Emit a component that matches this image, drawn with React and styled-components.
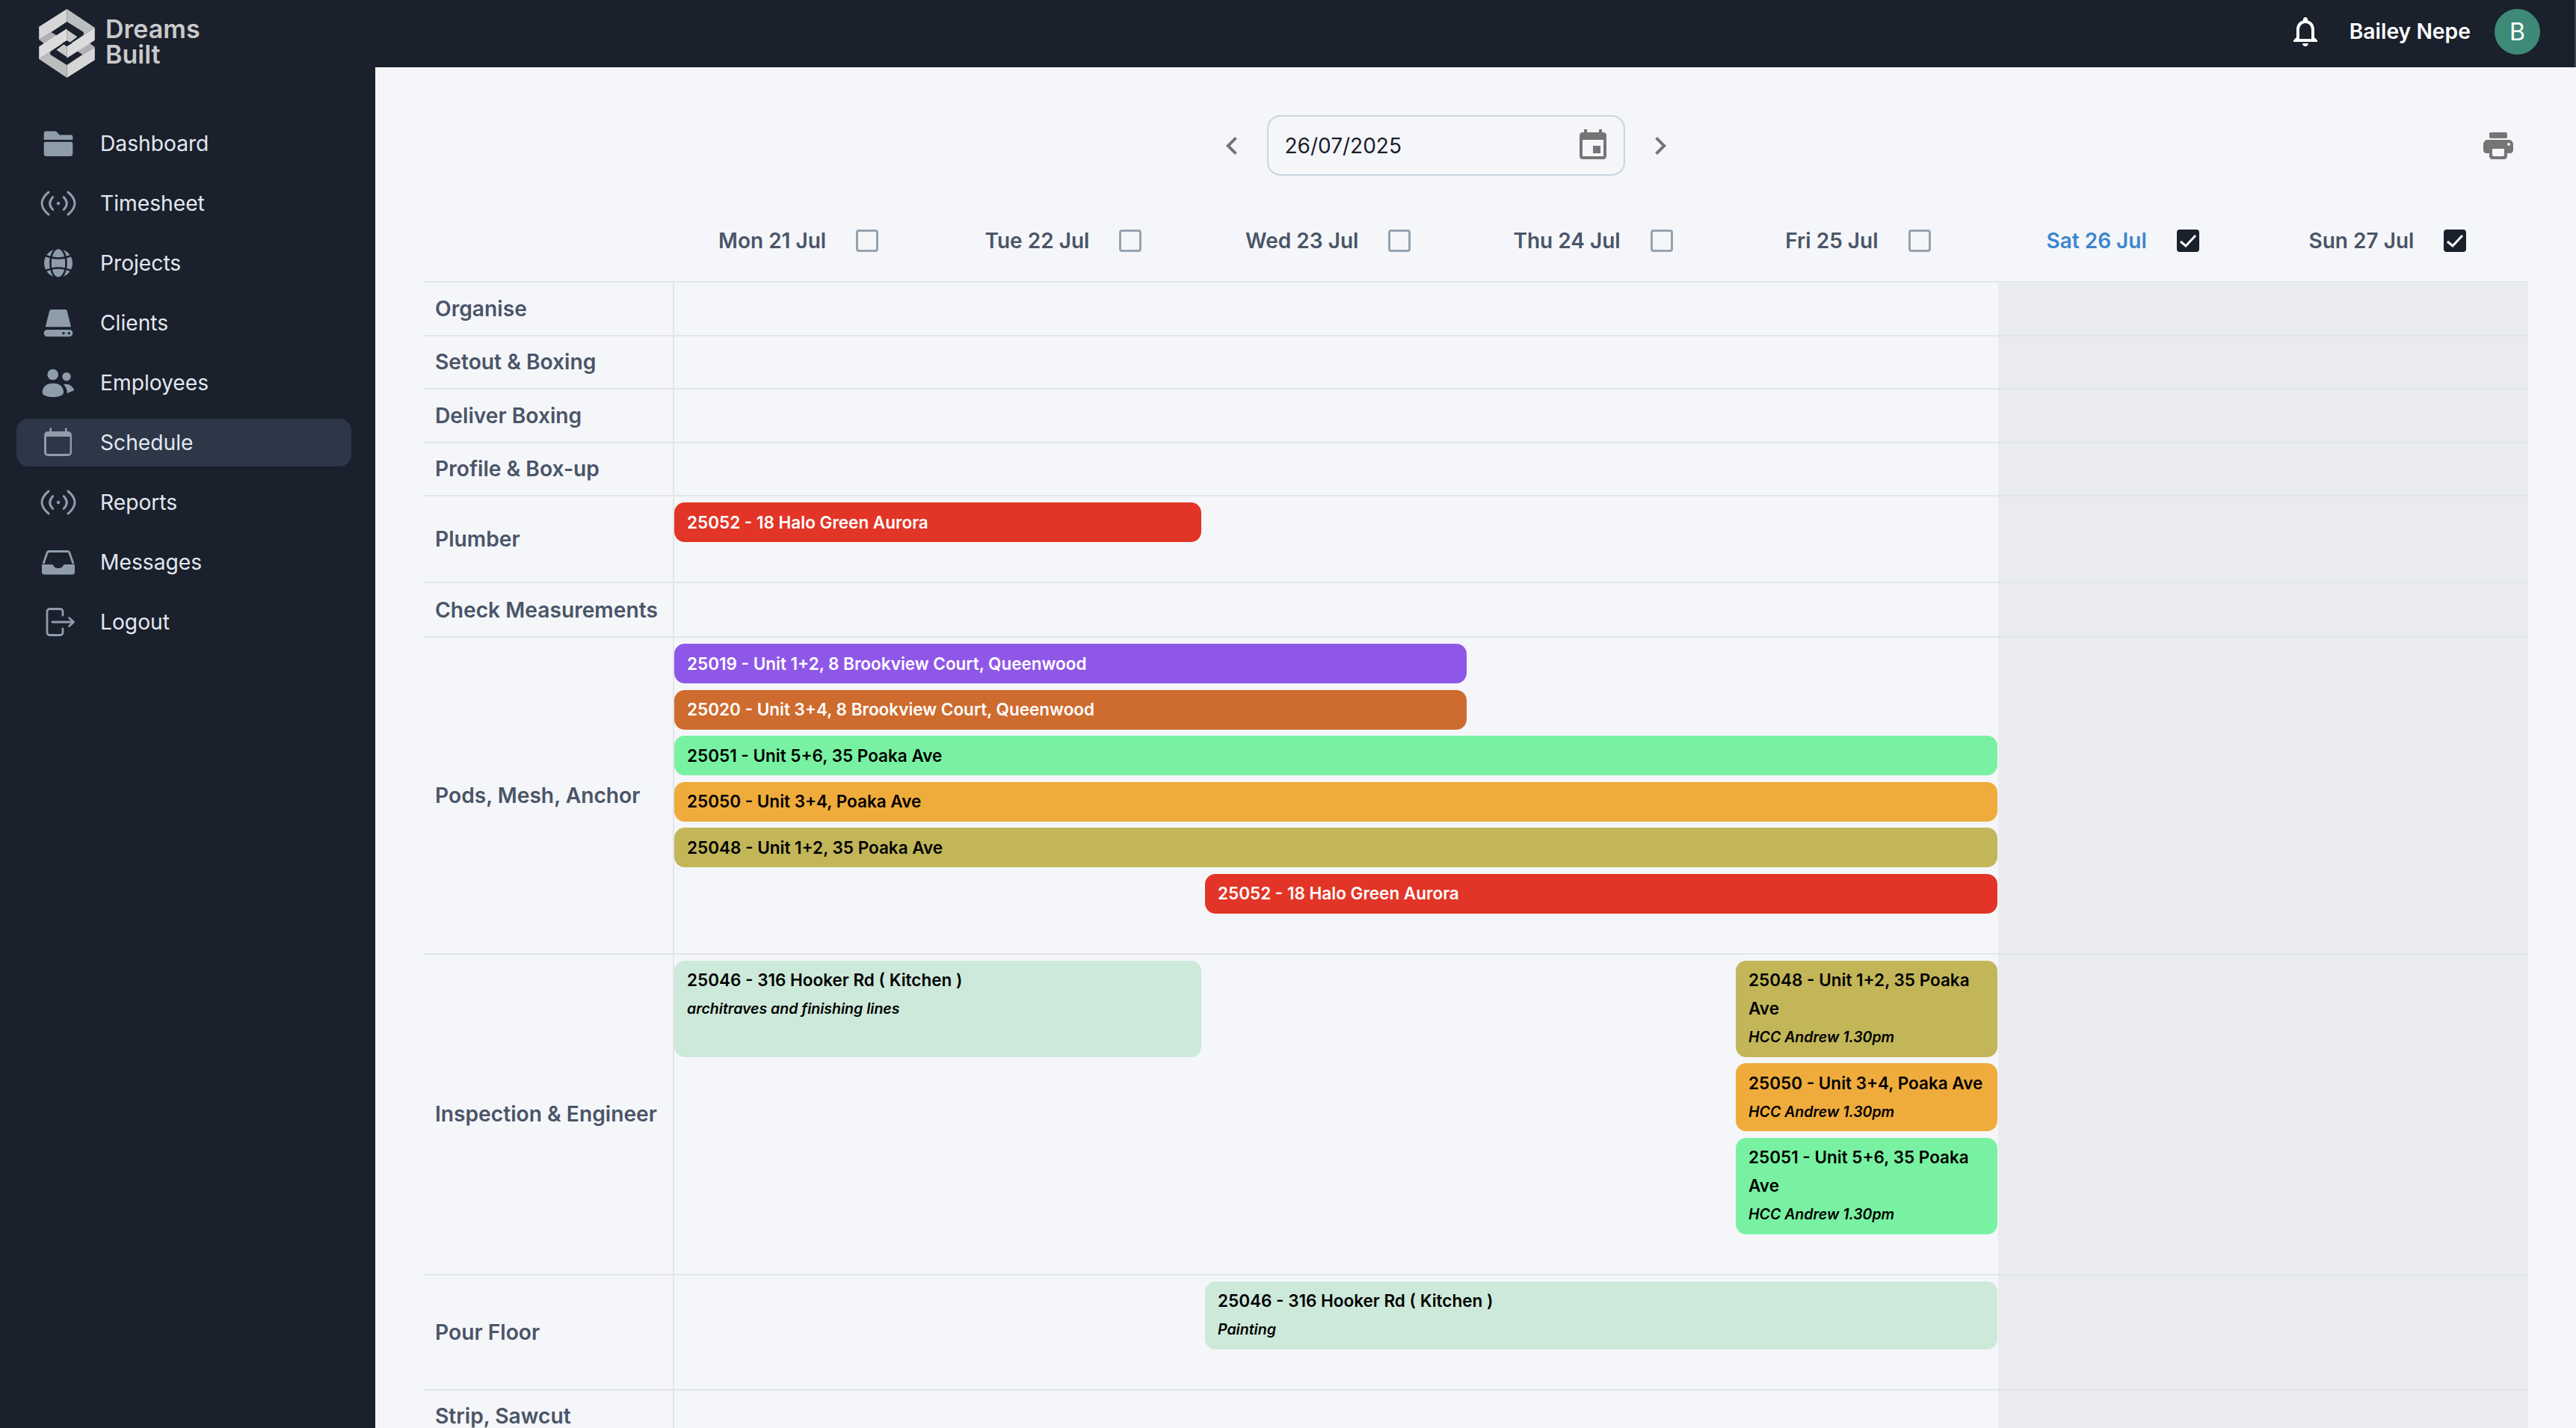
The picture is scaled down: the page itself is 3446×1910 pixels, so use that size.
import styled, { createGlobalStyle } from "styled-components";

const GlobalStyle = createGlobalStyle`
  html, body {
    margin: 0;
    height: 100%;
    overflow: hidden;
    font-family: Inter, "Liberation Sans", sans-serif;
  }
  * { box-sizing: border-box; }
`;

const Shell = styled.div`
  display: flex;
  height: 1910px;
  overflow: hidden;
  background: #f5f6f9;
`;

const Sidebar = styled.aside`
  width: 502px;
  flex-shrink: 0;
  background: #1a202c;
`;

const LogoRow = styled.div`
  display: flex;
  align-items: flex-start;
  gap: 14px;
  height: 160px;
  padding: 12px 0 0 52px;
`;

const LogoText = styled.div`
  margin-top: 10px;
  color: #c9c9ca;
  font-size: 34px;
  font-weight: 600;
  line-height: 34px;
`;

const Nav = styled.nav`
  display: flex;
  flex-direction: column;
  gap: 16px;
  padding: 0 32px 0 22px;
`;

const NavItem = styled.div`
  display: flex;
  align-items: center;
  gap: 32px;
  height: 64px;
  padding-left: 32px;
  border-radius: 16px;
  color: #e2e8f0;
  font-size: 28.2px;
  background: ${(p) => (p.$active ? "#2d3748" : "transparent")};
`;

const NavIcon = styled.svg`
  width: 48px;
  height: 48px;
  flex-shrink: 0;
  color: #8f9dab;
`;

const Content = styled.div`
  flex: 1;
  min-width: 0;
  display: flex;
  flex-direction: column;
`;

const TopBar = styled.header`
  height: 90px;
  flex-shrink: 0;
  display: flex;
  align-items: center;
  justify-content: flex-end;
  padding: 0 46px 6px 0;
  border-right: 2px solid #3f4650;
  background: #1a202c;
  color: #fff;
`;

const UserName = styled.span`
  margin: 0 32px 0 35px;
  font-size: 28.3px;
  font-weight: 600;
`;

const Avatar = styled.div`
  width: 61px;
  height: 61px;
  border-radius: 50%;
  display: flex;
  align-items: center;
  justify-content: center;
  background: #3d8a78;
  font-size: 32px;
`;

const Main = styled.main`
  padding: 64px 64px 0;
`;

const Toolbar = styled.div`
  display: flex;
  align-items: center;
  height: 81px;
`;

const DateNav = styled.div`
  flex: 1;
  display: flex;
  align-items: center;
  justify-content: center;
  gap: 23px;
`;

const DateField = styled.div`
  width: 479px;
  height: 81px;
  display: flex;
  align-items: center;
  justify-content: space-between;
  padding: 0 17px 0 22px;
  border: 2px solid #cbd5e0;
  border-radius: 18px;
  color: #1a202c;
  font-size: 28px;
`;

const PrintButton = styled.div`
  width: 80px;
  display: flex;
  justify-content: center;
`;

const MuiIcon = styled.svg`
  width: 48px;
  height: 48px;
  flex-shrink: 0;
  fill: ${(p) => p.$color || "#757575"};
`;

const DayHeader = styled.div`
  display: grid;
  grid-template-columns: 325px repeat(7, 354.3px);
  height: 141px;
  padding-top: 72px;
`;

const Day = styled.div`
  display: flex;
  align-items: center;
  justify-content: center;
  gap: 40px;
  height: 30px;
  color: ${(p) => (p.$active ? "#3b86cf" : "#4a5568")};
  font-size: 28px;
  font-weight: 600;
`;

const Check = styled.span`
  width: 30px;
  height: 30px;
  display: flex;
  align-items: center;
  justify-content: center;
  border-radius: 4px;
  border: 3px solid ${(p) => (p.$checked ? "#1a202c" : "#94a3b1")};
  background: ${(p) => (p.$checked ? "#1a202c" : "transparent")};
`;

const Row = styled.div`
  display: grid;
  grid-template-columns: 336px 2480px;
  min-height: ${(p) => p.$minHeight || 71.5}px;
  border-top: 2px solid #e2e5ea;
`;

const RowLabel = styled.div`
  display: flex;
  align-items: center;
  padding-left: 16px;
  border-right: 2px solid #e2e5ea;
  color: #4a5568;
  font-size: 28.2px;
  font-weight: 600;
  line-height: 28px;
`;

const Lanes = styled.div`
  display: grid;
  grid-template-columns: repeat(7, 350px);
  column-gap: 5px;
  row-gap: 8.5px;
  align-content: start;
  padding: ${(p) => (p.$empty ? "0" : "8px 0 53px")};
  background: linear-gradient(to right, transparent 1771px, #e9ebef 1771px);
`;

const Bar = styled.div`
  grid-column: ${(p) => p.$start} / span ${(p) => p.$span};
  grid-row: ${(p) => p.$lane || "auto"};
  padding: 7.5px 17px;
  border-radius: 14px;
  background: ${(p) => p.$bg};
  color: ${(p) => (p.$light ? "#fff" : "#000")};
  font-size: 22.5px;
  font-weight: 600;
  line-height: 38px;
`;

const BarNote = styled.div`
  font-size: 19.5px;
  font-style: italic;
`;

const RED = "#e23527";
const GREEN = "#78f2a2";
const ORANGE = "#efac3c";
const OLIVE = "#c2b659";
const MINT = "#cde9da";

const days = [
  { label: "Mon 21 Jul" },
  { label: "Tue 22 Jul" },
  { label: "Wed 23 Jul" },
  { label: "Thu 24 Jul" },
  { label: "Fri 25 Jul" },
  { label: "Sat 26 Jul", active: true, checked: true },
  { label: "Sun 27 Jul", checked: true },
];

const rows = [
  { name: "Organise" },
  { name: "Setout & Boxing" },
  { name: "Deliver Boxing" },
  { name: "Profile & Box-up" },
  {
    name: "Plumber",
    bars: [{ title: "25052 - 18 Halo Green Aurora", start: 1, span: 2, bg: RED, light: true }],
  },
  { name: "Check Measurements", minHeight: 73 },
  {
    name: "Pods, Mesh, Anchor",
    bars: [
      { title: "25019 - Unit 1+2, 8 Brookview Court, Queenwood", start: 1, span: 3, bg: "#8f57e8", light: true },
      { title: "25020 - Unit 3+4, 8 Brookview Court, Queenwood", start: 1, span: 3, bg: "#ce6b2e", light: true },
      { title: "25051 - Unit 5+6, 35 Poaka Ave", start: 1, span: 5, bg: GREEN },
      { title: "25050 - Unit 3+4, Poaka Ave", start: 1, span: 5, bg: ORANGE },
      { title: "25048 - Unit 1+2, 35 Poaka Ave", start: 1, span: 5, bg: OLIVE },
      { title: "25052 - 18 Halo Green Aurora", start: 3, span: 3, bg: RED, light: true },
    ],
  },
  {
    name: "Inspection & Engineer",
    bars: [
      { title: "25046 - 316 Hooker Rd ( Kitchen )", note: "architraves and finishing lines", start: 1, span: 2, lane: 1, bg: MINT },
      { title: "25048 - Unit 1+2, 35 Poaka Ave", note: "HCC Andrew 1.30pm", start: 5, span: 1, lane: 1, bg: OLIVE },
      { title: "25050 - Unit 3+4, Poaka Ave", note: "HCC Andrew 1.30pm", start: 5, span: 1, lane: 2, bg: ORANGE },
      { title: "25051 - Unit 5+6, 35 Poaka Ave", note: "HCC Andrew 1.30pm", start: 5, span: 1, lane: 3, bg: GREEN },
    ],
  },
  {
    name: "Pour Floor",
    bars: [{ title: "25046 - 316 Hooker Rd ( Kitchen )", note: "Painting", start: 3, span: 3, bg: MINT }],
  },
  { name: "Strip, Sawcut" },
];

const Logo = () => {
  const half = (
    <>
      <polygon points="36,108 148,37 148,88 85,130 36,160" fill="#d6d6d6" />
      <polygon points="148,37 260,112 215,142 215,130 148,88" fill="#bcbdbf" />
      <polygon points="36,160 85,130 124,154 72,188" fill="#b0b1b3" />
      <polygon points="148,120 190,149 148,180" fill="#c9c9ca" />
    </>
  );
  const band = <polygon points="260,112 260,162 148,234 148,186" fill="#dcdcdc" />;
  return (
    <svg width="75" height="92" viewBox="36 37 224 276">
      {half}
      <g transform="rotate(180 148 175)">{half}</g>
      {band}
      <g transform="rotate(180 148 175)">{band}</g>
      <polygon points="148,164 168,175 148,187 128,175" fill="#1a202c" />
    </svg>
  );
};

const FolderIcon = () => (
  <NavIcon viewBox="0 0 48 48" fill="currentColor">
    <path d="M7 7.5h12c1.5 0 2.5.5 3.5 1.5l3 3.5H41a2.3 2.3 0 0 1 2.3 2.3V19H4.7V10A2.5 2.5 0 0 1 7 7.5Z" />
    <path d="M4.7 24a2.3 2.3 0 0 1 2.3-2.3h34a2.3 2.3 0 0 1 2.3 2.3v13.5a3.5 3.5 0 0 1-3.5 3.5H8.2a3.5 3.5 0 0 1-3.5-3.5Z" />
  </NavIcon>
);

const SignalIcon = () => (
  <NavIcon viewBox="0 0 48 48" fill="none" stroke="currentColor" strokeWidth="3" strokeLinecap="round">
    <circle cx="24" cy="24" r="2.2" fill="currentColor" stroke="none" />
    <path d="M16.7 15.7Q8.7 24 16.7 32.3" />
    <path d="M31.3 15.7Q39.3 24 31.3 32.3" />
    <path d="M11 9Q-7 24 11 39" />
    <path d="M37 9Q55 24 37 39" />
  </NavIcon>
);

const GlobeIcon = () => (
  <NavIcon viewBox="0 0 48 48">
    <circle cx="24" cy="24" r="19" fill="currentColor" />
    <g fill="none" stroke="#1a202c" strokeWidth="2.6">
      <ellipse cx="24" cy="24" rx="10.5" ry="20" />
      <path d="M5 13Q24 22 43 13" />
      <path d="M5 35Q24 26 43 35" />
    </g>
  </NavIcon>
);

const DriveIcon = () => (
  <NavIcon viewBox="0 0 48 48" fill="currentColor">
    <path d="M15 6h18a3 3 0 0 1 2.9 2.4L41 29.3H6.7L12 8.4A3 3 0 0 1 15 6Z" />
    <rect x="4.7" y="33" width="38.6" height="9.3" rx="4.6" />
    <circle cx="31" cy="37.7" r="1.7" fill="#1a202c" />
    <circle cx="38.3" cy="37.7" r="1.7" fill="#1a202c" />
  </NavIcon>
);

const UsersIcon = () => (
  <NavIcon viewBox="0 0 48 48" fill="currentColor">
    <circle cx="16.7" cy="13" r="7.3" />
    <circle cx="35" cy="15.7" r="5.7" />
    <path d="M2.7 37C2.7 29 8 24.7 17 24.7S31 29 31 37C31 41 24 43 17 43S2.7 41 2.7 37Z" />
    <path d="M31 26C38 24.5 43 28 45.3 34L36 38C35.5 33 34 29 31 26Z" />
  </NavIcon>
);

const CalendarIcon = () => (
  <NavIcon viewBox="0 0 48 48" fill="currentColor">
    <path d="M12.4 4.5h2.6V9h18V4.5h2.6V9h1.4a5 5 0 0 1 5 5v23a5 5 0 0 1-5 5H10a5 5 0 0 1-5-5V14a5 5 0 0 1 5-5h2.4ZM8 16v21a2 2 0 0 0 2 2h27.6a2 2 0 0 0 2-2V16Z" fillRule="evenodd" />
  </NavIcon>
);

const InboxIcon = () => (
  <NavIcon viewBox="0 0 48 48" fill="currentColor">
    <path d="M4 26L9 11.5c.5-1.2 1.5-2 3-2h24c1.5 0 2.5.8 3 2L44 26" fill="none" stroke="currentColor" strokeWidth="2.8" />
    <path d="M2 27h13.5c1 0 1.5.5 2 1.5 1 2.5 3.5 3.5 6.5 3.5s5.5-1 6.5-3.5c.5-1 1-1.5 2-1.5H46v10a3.5 3.5 0 0 1-3.5 3.5h-37A3.5 3.5 0 0 1 2 37Z" />
  </NavIcon>
);

const LogoutIcon = () => (
  <NavIcon viewBox="0 0 48 48" fill="none" stroke="currentColor" strokeWidth="2.8" strokeLinecap="round" strokeLinejoin="round">
    <path d="M30 15V10a3.5 3.5 0 0 0-3.5-3.5h-14A3.5 3.5 0 0 0 9 10v28a3.5 3.5 0 0 0 3.5 3.5h14a3.5 3.5 0 0 0 3.5-3.5v-5" />
    <path d="M16 24H44" />
    <path d="M38.5 18.5L44.5 24L38.5 29.5" />
  </NavIcon>
);

const navItems = [
  { label: "Dashboard", icon: <FolderIcon /> },
  { label: "Timesheet", icon: <SignalIcon /> },
  { label: "Projects", icon: <GlobeIcon /> },
  { label: "Clients", icon: <DriveIcon /> },
  { label: "Employees", icon: <UsersIcon /> },
  { label: "Schedule", icon: <CalendarIcon />, active: true },
  { label: "Reports", icon: <SignalIcon /> },
  { label: "Messages", icon: <InboxIcon /> },
  { label: "Logout", icon: <LogoutIcon /> },
];

const App = () => {
  return (
    <Shell>
      <GlobalStyle />
      <Sidebar>
        <LogoRow>
          <Logo />
          <LogoText>
            Dreams
            <br />
            Built
          </LogoText>
        </LogoRow>
        <Nav>
          {navItems.map((item) => (
            <NavItem key={item.label} $active={item.active}>
              {item.icon}
              {item.label}
            </NavItem>
          ))}
        </Nav>
      </Sidebar>
      <Content>
        <TopBar>
          <MuiIcon viewBox="0 0 24 24" $color="#fff">
            <path d="M12 22c1.1 0 2-.9 2-2h-4c0 1.1.9 2 2 2zm6-6v-5c0-3.07-1.63-5.64-4.5-6.32V4c0-.83-.67-1.5-1.5-1.5s-1.5.67-1.5 1.5v.68C7.64 5.36 6 7.92 6 11v5l-2 2v1h16v-1l-2-2zm-2 1H8v-6c0-2.48 1.51-4.5 4-4.5s4 2.02 4 4.5v6z" />
          </MuiIcon>
          <UserName>Bailey Nepe</UserName>
          <Avatar>B</Avatar>
        </TopBar>
        <Main>
          <Toolbar>
            <DateNav>
              <MuiIcon viewBox="0 0 24 24">
                <path d="M15.41 7.41 14 6l-6 6 6 6 1.41-1.41L10.83 12z" />
              </MuiIcon>
              <DateField>
                26/07/2025
                <MuiIcon viewBox="0 0 24 24">
                  <path d="M17 12h-5v5h5v-5zM16 1v2H8V1H6v2H5c-1.11 0-1.99.9-1.99 2L3 19c0 1.1.89 2 2 2h14c1.1 0 2-.9 2-2V5c0-1.1-.9-2-2-2h-1V1h-2zm3 18H5V8h14v11z" />
                </MuiIcon>
              </DateField>
              <MuiIcon viewBox="0 0 24 24">
                <path d="M10 6 8.59 7.41 13.17 12l-4.58 4.59L10 18l6-6z" />
              </MuiIcon>
            </DateNav>
            <PrintButton>
              <MuiIcon viewBox="0 0 24 24">
                <path d="M19 8H5c-1.66 0-3 1.34-3 3v4c0 1.1.9 2 2 2h2v2c0 1.1.9 2 2 2h8c1.1 0 2-.9 2-2v-2h2c1.1 0 2-.9 2-2v-4c0-1.66-1.34-3-3-3zm-4 11H9c-.55 0-1-.45-1-1v-4h8v4c0 .55-.45 1-1 1zm4-7c-.55 0-1-.45-1-1s.45-1 1-1 1 .45 1 1-.45 1-1 1zm-2-9H7c-.55 0-1 .45-1 1v2c0 .55.45 1 1 1h10c.55 0 1-.45 1-1V4c0-.55-.45-1-1-1z" />
              </MuiIcon>
            </PrintButton>
          </Toolbar>
          <DayHeader>
            <span />
            {days.map((day) => (
              <Day key={day.label} $active={day.active}>
                {day.label}
                <Check $checked={day.checked}>
                  {day.checked && (
                    <svg width="24" height="24" viewBox="0 0 24 24" fill="none" stroke="#fff" strokeWidth="3">
                      <path d="M2 13l7 6L22 5" />
                    </svg>
                  )}
                </Check>
              </Day>
            ))}
          </DayHeader>
          {rows.map((row) => (
            <Row key={row.name} $minHeight={row.minHeight}>
              <RowLabel>{row.name}</RowLabel>
              <Lanes $empty={!row.bars}>
                {row.bars &&
                  row.bars.map((bar) => (
                    <Bar
                      key={bar.title + bar.start}
                      $start={bar.start}
                      $span={bar.span}
                      $lane={bar.lane}
                      $bg={bar.bg}
                      $light={bar.light}
                    >
                      {bar.title}
                      {bar.note && <BarNote>{bar.note}</BarNote>}
                    </Bar>
                  ))}
              </Lanes>
            </Row>
          ))}
        </Main>
      </Content>
    </Shell>
  );
};

export default App;
